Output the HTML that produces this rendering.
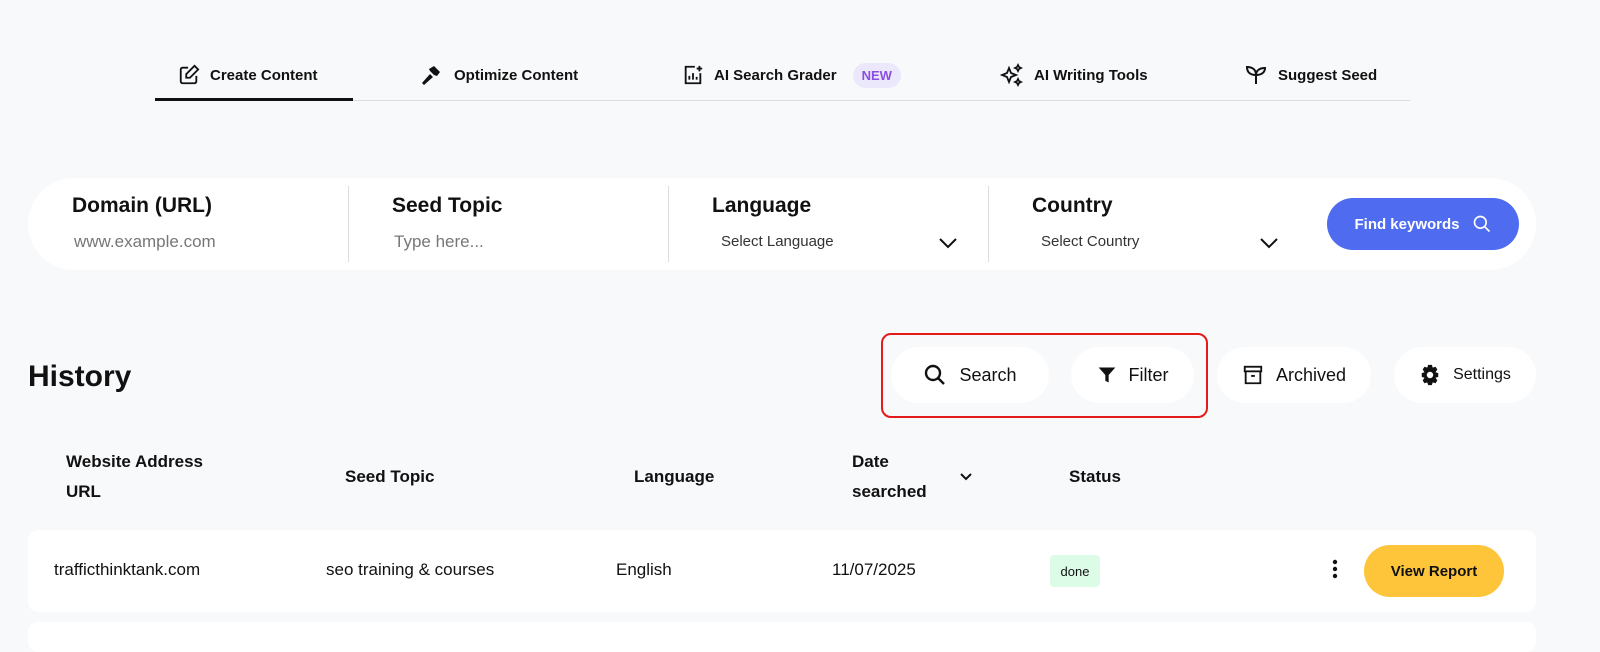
<!DOCTYPE html>
<html><head><style>
*{box-sizing:border-box;margin:0;padding:0}
body{width:1600px;height:638px;background:#f8f9fb;font-family:"Liberation Sans",sans-serif;color:#111;position:relative;overflow:hidden}
.a{position:absolute}
.tab{position:absolute;top:64px;font-size:15px;font-weight:600;display:flex;align-items:center;gap:10px;height:22px}
.lbl{position:absolute;top:194px;font-size:21px;font-weight:700}
.ph{position:absolute;top:232px;font-size:17px;color:#777}
.sel{position:absolute;top:233px;font-size:15px;color:#333}
.div{position:absolute;top:186px;width:1px;height:76px;background:#ddd}
.btn{position:absolute;top:347px;height:56px;background:#fff;border-radius:28px;display:flex;align-items:center;justify-content:center;gap:12px;font-size:18px}
.th{position:absolute;font-size:17px;font-weight:600;line-height:30px}
.td{position:absolute;top:560px;font-size:17px}
</style></head><body>
<div class="tab" style="left:178px"><svg width="22" height="22" viewBox="0 0 24 24" fill="none" stroke="#111" stroke-width="2"><path d="M11 4H5a2 2 0 0 0-2 2v13a2 2 0 0 0 2 2h13a2 2 0 0 0 2-2v-6"/><path d="M18 2l4 4-9 9H9v-4z"/></svg>Create Content</div>
<div class="tab" style="left:418px"><svg width="26" height="24" viewBox="0 0 24 24"><path d="M3 20l8-9 3 3-9 8z M10 6l5-3 6 6-3 4-3-1-4-4z" fill="#111"/></svg>Optimize Content</div>
<div class="tab" style="left:682px"><svg width="22" height="22" viewBox="0 0 24 24" fill="none" stroke="#111" stroke-width="2"><path d="M14 3H4v18h16V10"/><path d="M8 17v-4M12 17v-7M16 17v-3"/><path d="M19 2v6M16 5h6"/></svg>AI Search Grader<span style="background:#ece8fb;color:#8a4ee0;font-size:13px;padding:5px 9px;border-radius:14px;margin-left:6px">NEW</span></div>
<div class="tab" style="left:1000px"><svg width="24" height="24" viewBox="0 0 24 24" fill="none" stroke="#111" stroke-width="1.8"><path d="M9 5l2 5 5 2-5 2-2 5-2-5-5-2 5-2z"/><path d="M18 2l1 2 2 1-2 1-1 2-1-2-2-1 2-1zM18 16l1 2 2 1-2 1-1 2-1-2-2-1 2-1z"/></svg>AI Writing Tools</div>
<div class="tab" style="left:1244px"><svg width="24" height="24" viewBox="0 0 24 24" fill="none" stroke="#111" stroke-width="2"><path d="M12 21v-9M12 12C12 7 9 4 3 4c0 5 3 8 9 8zM12 12c0-4 3-7 9-7 0 4-3 7-9 7"/></svg>Suggest Seed</div>
<div class="a" style="left:155px;top:100px;width:1255px;height:1px;background:#ddd"></div>
<div class="a" style="left:155px;top:98px;width:198px;height:3px;background:#111"></div>

<div class="a" style="left:28px;top:178px;width:1508px;height:92px;background:#fff;border-radius:46px"></div>
<div class="lbl" style="left:72px">Domain (URL)</div><div class="ph" style="left:74px">www.example.com</div>
<div class="div" style="left:348px"></div>
<div class="lbl" style="left:392px">Seed Topic</div><div class="ph" style="left:394px">Type here...</div>
<div class="div" style="left:668px"></div>
<div class="lbl" style="left:712px">Language</div><div class="sel" style="left:721px">Select Language</div>
<svg class="a" style="left:938px;top:236px" width="20" height="14" viewBox="0 0 20 14" fill="none" stroke="#111" stroke-width="2"><path d="M2 3l8 8 8-8"/></svg>
<div class="div" style="left:988px"></div>
<div class="lbl" style="left:1032px">Country</div><div class="sel" style="left:1041px">Select Country</div>
<svg class="a" style="left:1259px;top:236px" width="20" height="14" viewBox="0 0 20 14" fill="none" stroke="#111" stroke-width="2"><path d="M2 3l8 8 8-8"/></svg>
<div class="a" style="left:1327px;top:198px;width:192px;height:52px;background:#4f6cf0;border-radius:26px;color:#fff;font-size:15px;font-weight:600;display:flex;align-items:center;justify-content:center;gap:12px">Find keywords<svg width="20" height="20" viewBox="0 0 24 24" fill="none" stroke="#fff" stroke-width="2"><circle cx="10" cy="10" r="7"/><path d="M15 15l6 6"/></svg></div>

<div class="a" style="left:28px;top:360px;font-size:30px;font-weight:700">History</div>
<div class="a" style="left:881px;top:333px;width:327px;height:85px;border:2px solid #e41b1b;border-radius:10px"></div>
<div class="btn" style="left:891px;width:158px"><svg width="24" height="24" viewBox="0 0 24 24" fill="none" stroke="#111" stroke-width="2.4"><circle cx="10" cy="10" r="7"/><path d="M15 15l6 6"/></svg>Search</div>
<div class="btn" style="left:1071px;width:123px"><svg width="20" height="20" viewBox="0 0 24 24" fill="#111"><path d="M2 3h20l-8 9v9l-4-2v-7z"/></svg>Filter</div>
<div class="btn" style="left:1217px;width:154px"><svg width="22" height="24" viewBox="0 0 24 24" fill="none" stroke="#111" stroke-width="2"><rect x="3" y="3" width="18" height="5"/><path d="M4 8v13h16V8M10 13h4"/></svg>Archived</div>
<div class="btn" style="left:1394px;width:142px;font-size:16px"><svg width="22" height="22" viewBox="0 0 24 24" fill="#111"><path d="M10 1h4l1 3 3-1 2 3-2 3 3 1v4l-3 1 2 3-2 3-3-1-1 3h-4l-1-3-3 1-2-3 2-3-3-1v-4l3-1-2-3 2-3 3 1z"/><circle cx="12" cy="12" r="3.5" fill="#fff"/></svg>Settings</div>

<div class="th" style="left:66px;top:447px">Website Address<br>URL</div>
<div class="th" style="left:345px;top:462px">Seed Topic</div>
<div class="th" style="left:634px;top:462px">Language</div>
<div class="th" style="left:852px;top:447px">Date<br>searched</div>
<svg class="a" style="left:959px;top:472px" width="14" height="10" viewBox="0 0 14 10" fill="none" stroke="#111" stroke-width="2"><path d="M2 2l5 5 5-5"/></svg>
<div class="th" style="left:1069px;top:462px">Status</div>

<div class="a" style="left:28px;top:530px;width:1508px;height:82px;background:#fff;border-radius:10px"></div>
<div class="a" style="left:28px;top:622px;width:1508px;height:30px;background:#fff;border-radius:10px"></div>
<div class="td" style="left:54px">trafficthinktank.com</div>
<div class="td" style="left:326px">seo training &amp; courses</div>
<div class="td" style="left:616px">English</div>
<div class="td" style="left:832px">11/07/2025</div>
<div class="a" style="left:1050px;top:555px;width:50px;height:32px;background:#dcfce7;border-radius:4px;font-size:13px;display:flex;align-items:center;justify-content:center">done</div>
<svg class="a" style="left:1330px;top:559px" width="10" height="22" viewBox="0 0 10 22" fill="#111"><circle cx="5" cy="3" r="2.2"/><circle cx="5" cy="10" r="2.2"/><circle cx="5" cy="17" r="2.2"/></svg>
<div class="a" style="left:1364px;top:545px;width:140px;height:52px;background:#fec53a;border-radius:26px;font-size:15px;font-weight:600;display:flex;align-items:center;justify-content:center">View Report</div>
</body></html>
